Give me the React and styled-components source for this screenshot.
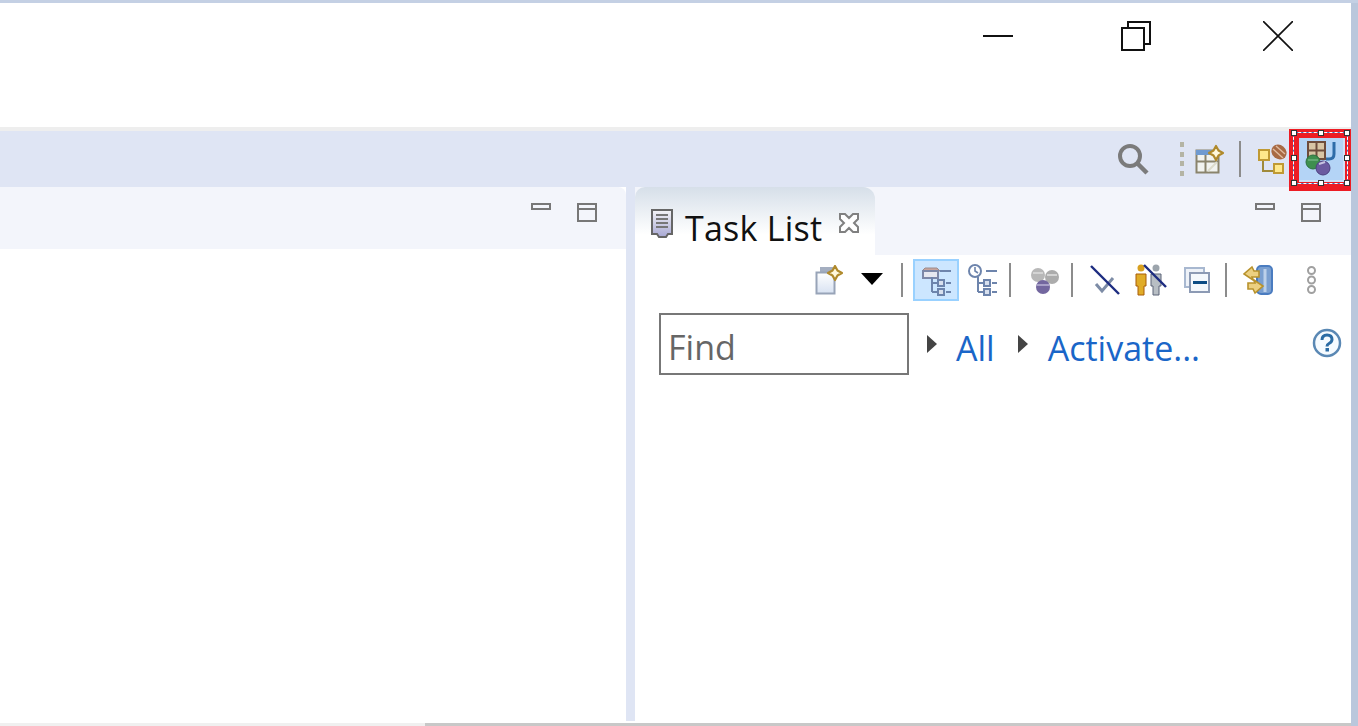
import styled, { createGlobalStyle } from "styled-components";

const GlobalStyle = createGlobalStyle`
  html, body {
    margin: 0;
    padding: 0;
    background: #fff;
    overflow: hidden;
  }
`;

const MinimizeIcon = () => (
  <svg width="30" height="30" viewBox="0 0 30 30">
    <rect x="0" y="14" width="30" height="2" fill="#111" />
  </svg>
);

const RestoreIcon = () => (
  <svg width="30" height="30" viewBox="0 0 30 30" fill="none" stroke="#111" strokeWidth="2">
    <rect x="1" y="7" width="22" height="22" />
    <path d="M7 7V1h22v22h-6" />
  </svg>
);

const CloseIcon = () => (
  <svg width="30" height="30" viewBox="0 0 30 30" stroke="#111" strokeWidth="1.6">
    <path d="M0 0l30 30M30 0L0 30" />
  </svg>
);

const SearchIcon = () => (
  <svg width="32" height="32" viewBox="0 0 32 32" fill="none" stroke="#7b7b7b">
    <circle cx="13" cy="13" r="10" strokeWidth="4" />
    <path d="M20 20l10 10" strokeWidth="4.5" />
  </svg>
);

const DotsIcon = () => (
  <svg width="4" height="34" viewBox="0 0 4 34" fill="#b4b4a4">
    <rect y="0" width="4" height="5" />
    <rect y="10" width="4" height="5" />
    <rect y="19" width="4" height="5" />
    <rect y="29" width="4" height="5" />
  </svg>
);

const Sparkle = ({ x, y }) => (
  <g transform={`translate(${x} ${y})`}>
    <path
      d="M7 0l2.5 4.5L14 7 9.5 9.5 7 14 4.5 9.5 0 7l4.5-2.5z"
      fill="#fff8dc"
      stroke="#b08a2c"
      strokeWidth="2.2"
      strokeLinejoin="round"
    />
  </g>
);

const NewPerspectiveIcon = () => (
  <svg width="30" height="30" viewBox="0 0 30 30">
    <rect x="1.5" y="6.5" width="22" height="22" fill="#f1f3f0" stroke="#8a846c" strokeWidth="2" />
    <rect x="1" y="6" width="23" height="5" fill="#6f9ad0" />
    <path d="M1.5 17.5h22M10.5 11v17" stroke="#8a846c" strokeWidth="2" />
    <path d="M13 27l9-9" stroke="#dcdccc" strokeWidth="2" />
    <Sparkle x="14" y="2" />
  </svg>
);

const PlanIcon = () => (
  <svg width="30" height="32" viewBox="0 0 30 32">
    <path d="M5 15v13h10" fill="none" stroke="#a08a3a" strokeWidth="2" />
    <rect x="1" y="7" width="10" height="10" fill="#ffe98c" stroke="#c09a34" strokeWidth="2" />
    <rect x="16" y="21" width="9" height="9" fill="#ffe98c" stroke="#c09a34" strokeWidth="2" />
    <ellipse cx="21" cy="9" rx="8" ry="7" fill="#a86a44" transform="rotate(40 21 9)" />
    <path d="M15 6l10 9M18 3l9 8" stroke="#e0bca0" strokeWidth="1.4" />
  </svg>
);

const JavaPerspectiveIcon = () => (
  <svg width="34" height="36" viewBox="0 0 34 36">
    <rect x="5" y="1" width="17" height="17" fill="#d8c4a4" stroke="#6e4c3c" strokeWidth="2" />
    <path d="M13.5 0v18M5 9.5h17" stroke="#6e4c3c" strokeWidth="2" />
    <path d="M31 1v12q0 5-5 5h-3" fill="none" stroke="#2f6ca8" strokeWidth="3" />
    <circle cx="10" cy="21" r="7" fill="#3e8f4e" stroke="#2d6f40" strokeWidth="1" />
    <path d="M5 19h10" stroke="#6cb07c" strokeWidth="1.6" />
    <circle cx="20" cy="27" r="7" fill="#6b5aa0" stroke="#4c4080" strokeWidth="1" />
    <path d="M16 23l6-2" stroke="#c8c4e0" strokeWidth="2" />
  </svg>
);

const TaskSheetIcon = () => (
  <svg width="22" height="30" viewBox="0 0 22 30">
    <path d="M1 1h20v24h-4l-2 3H8l-2-3H1z" fill="url(#sheet)" stroke="#666" strokeWidth="2" />
    <defs>
      <linearGradient id="sheet" x1="0" y1="0" x2="0" y2="1">
        <stop offset="0" stopColor="#f4f4f6" />
        <stop offset="1" stopColor="#a8a8d4" />
      </linearGradient>
    </defs>
    <path d="M5 6h12M5 10h12M5 14h12M5 18h12" stroke="#777" strokeWidth="2" />
  </svg>
);

const TabCloseIcon = () => (
  <svg width="20" height="20" viewBox="0 0 20 20">
    <path
      d="M1 1h5l4 4 4-4h5v5l-4 4 4 4v5h-5l-4-4-4 4H1v-5l4-4-4-4z"
      fill="#fff"
      stroke="#808080"
      strokeWidth="2"
    />
  </svg>
);

const NewTaskIcon = () => (
  <svg width="28" height="30" viewBox="0 0 28 30">
    <defs>
      <linearGradient id="page" x1="0" y1="0" x2="0" y2="1">
        <stop offset="0" stopColor="#fff" />
        <stop offset="1" stopColor="#d8e2f2" />
      </linearGradient>
    </defs>
    <path d="M5 2h13v6H5z" fill="#a4aec0" />
    <rect x="1.5" y="7.5" width="18" height="21" fill="url(#page)" stroke="#98a4b8" strokeWidth="2" />
    <Sparkle x="13" y="1" />
  </svg>
);

const Tree = () => (
  <>
    <path d="M11 13v15M11 19h8M11 28h8" stroke="#6d84ac" strokeWidth="2" fill="none" />
    <rect x="17" y="16" width="6" height="6" fill="#d8e0ee" stroke="#6d84ac" strokeWidth="2" />
    <rect x="17" y="25" width="6" height="6" fill="#d8e0ee" stroke="#6d84ac" strokeWidth="2" />
    <path d="M19 7h11M25 19h5M25 28h5" stroke="#6d84ac" strokeWidth="2" />
  </>
);

const CategoryTreeIcon = () => (
  <svg width="30" height="32" viewBox="0 0 30 32">
    <path d="M4 4h12l3 3H1z" fill="#c8a49c" stroke="#9c8c8c" strokeWidth="1" />
    <rect x="2" y="7" width="15" height="7" fill="#e6e8f0" stroke="#7c88a8" strokeWidth="2" />
    <Tree />
  </svg>
);

const ScheduleTreeIcon = () => (
  <svg width="30" height="32" viewBox="0 0 30 32">
    <circle cx="8" cy="7" r="6" fill="#fff" stroke="#6d84ac" strokeWidth="2" />
    <path d="M8 3v4l3 2" fill="none" stroke="#6d84ac" strokeWidth="1.6" />
    <Tree />
  </svg>
);

const FocusIcon = () => (
  <svg width="28" height="28" viewBox="0 0 28 28">
    <circle cx="7" cy="9" r="7" fill="#b8b8b8" />
    <circle cx="21" cy="11" r="7" fill="#acacac" />
    <path d="M2 7h10M16 9h10" stroke="#d4d4d4" strokeWidth="2" />
    <circle cx="12" cy="21" r="7" fill="#73679f" />
    <path d="M6 19h12" stroke="#a8a0c8" strokeWidth="2" />
  </svg>
);

const HideCompletedIcon = () => (
  <svg width="30" height="30" viewBox="0 0 30 30">
    <path d="M6 19l6 7 11-13" fill="none" stroke="#7d8ca6" strokeWidth="3" />
    <path d="M1 1l28 28" stroke="#1c2c80" strokeWidth="2.4" />
  </svg>
);

const PeopleIcon = () => (
  <svg width="34" height="32" viewBox="0 0 34 32">
    <circle cx="8" cy="4" r="3.5" fill="#d8a020" />
    <path d="M3 10h10v12h-2v9H5v-9H3z" fill="#e0ac28" stroke="#a85c08" strokeWidth="1" />
    <circle cx="23" cy="4" r="3.5" fill="#9ca4ac" />
    <path d="M18 10h10v12h-2v9h-6v-9h-2z" fill="#b8bec4" stroke="#5c6478" strokeWidth="1" />
    <path d="M11 1l22 22" stroke="#1c2c80" strokeWidth="2.4" />
  </svg>
);

const CollapseIcon = () => (
  <svg width="26" height="26" viewBox="0 0 26 26">
    <rect x="1" y="1" width="19" height="19" fill="#eef2f8" stroke="#a8b8d0" strokeWidth="2" />
    <rect x="6" y="6" width="19" height="19" fill="#f4f8fc" stroke="#8c9ab4" strokeWidth="2" />
    <rect x="9" y="14" width="14" height="3" fill="#0c4c84" />
  </svg>
);

const SyncIcon = () => (
  <svg width="30" height="30" viewBox="0 0 30 30">
    <rect x="14" y="1" width="15" height="28" rx="4" fill="#7a9fd0" stroke="#4a7cc0" strokeWidth="2" />
    <path d="M22 4v23" stroke="#bcd0ea" strokeWidth="3" />
    <path d="M9 2l2 4h5v6H9l1 3-9-6z" fill="#ecd080" stroke="#b8922c" strokeWidth="1.6" />
    <path d="M12 28l-2-4H5v-6h7l-1-3 9 6z" fill="#ecd080" stroke="#b8922c" strokeWidth="1.6" />
  </svg>
);

const ViewMenuIcon = () => (
  <svg width="11" height="28" viewBox="0 0 11 28" fill="#fff" stroke="#a0a0a0" strokeWidth="2">
    <circle cx="5.5" cy="4.5" r="3.5" />
    <circle cx="5.5" cy="14" r="3.5" />
    <circle cx="5.5" cy="23.5" r="3.5" />
  </svg>
);

const HelpIcon = () => (
  <svg width="30" height="30" viewBox="0 0 30 30">
    <circle cx="15" cy="15" r="13" fill="#f6fbff" stroke="#5a88b4" strokeWidth="2.5" />
    <path
      d="M10 12q0-5 5-5t5 4.5q0 2.5-3 4-2 1-2 3"
      fill="none"
      stroke="#2c6ca4"
      strokeWidth="3"
    />
    <rect x="13.5" y="20" width="3.5" height="3.5" fill="#2c6ca4" />
  </svg>
);

const handleSpots = [
  ["0%", "0%"],
  ["50%", "0%"],
  ["100%", "0%"],
  ["0%", "50%"],
  ["100%", "50%"],
  ["0%", "100%"],
  ["50%", "100%"],
  ["100%", "100%"],
];

const App = () => {
  return (
    <>
      <GlobalStyle />
      <Page>
        <TopEdge />
        <Frame>
          <Window>
            <TitleBar>
              <WindowButton $w={132}><MinimizeIcon /></WindowButton>
              <WindowButton $w={144}><RestoreIcon /></WindowButton>
              <WindowButton $w={140}><CloseIcon /></WindowButton>
            </TitleBar>
            <Divider />
            <PerspectiveBar>
              <BarSlot $ml={0}><SearchIcon /></BarSlot>
              <BarSlot $ml={31}><DotsIcon /></BarSlot>
              <BarSlot $ml={11}><NewPerspectiveIcon /></BarSlot>
              <BarSeparator />
              <BarSlot $ml={17}><PlanIcon /></BarSlot>
              <ActivePerspective>
                <JavaPerspectiveIcon />
                <Highlight />
                <SelectionBox>
                  {handleSpots.map(([x, y]) => (
                    <Handle key={x + y} $x={x} $y={y} />
                  ))}
                </SelectionBox>
              </ActivePerspective>
            </PerspectiveBar>
            <Workbench>
              <EditorPanel>
                <EditorHeader>
                  <PaneMinimize />
                  <PaneMaximize />
                </EditorHeader>
              </EditorPanel>
              <Sash />
              <TaskPanel>
                <TaskHeader>
                  <Tab>
                    <TaskSheetIcon />
                    <TabTitle>Task List</TabTitle>
                    <TabClose><TabCloseIcon /></TabClose>
                  </Tab>
                  <PaneControls>
                    <PaneMinimize />
                    <PaneMaximize />
                  </PaneControls>
                </TaskHeader>
                <TaskToolbar>
                  <ToolSlot><NewTaskIcon /></ToolSlot>
                  <DropArrow />
                  <ToolSeparator $ml={18} />
                  <ToggledTool><CategoryTreeIcon /></ToggledTool>
                  <ToolSlot $ml={8}><ScheduleTreeIcon /></ToolSlot>
                  <ToolSeparator $ml={12} />
                  <ToolSlot $ml={20}><FocusIcon /></ToolSlot>
                  <ToolSeparator $ml={12} />
                  <ToolSlot $ml={17}><HideCompletedIcon /></ToolSlot>
                  <ToolSlot $ml={13}><PeopleIcon /></ToolSlot>
                  <ToolSlot $ml={17}><CollapseIcon /></ToolSlot>
                  <ToolSeparator $ml={15} />
                  <ToolSlot $ml={16}><SyncIcon /></ToolSlot>
                  <ToolSlot $ml={33}><ViewMenuIcon /></ToolSlot>
                </TaskToolbar>
                <FindRow>
                  <FindBox>Find</FindBox>
                  <Twisty $ml={18} />
                  <FilterLink $ml={19}>All</FilterLink>
                  <Twisty $ml={23} />
                  <FilterLink $ml={20}>Activate...</FilterLink>
                  <HelpSlot><HelpIcon /></HelpSlot>
                </FindRow>
              </TaskPanel>
            </Workbench>
            <ScrollTrack>
              <ScrollThumb />
            </ScrollTrack>
          </Window>
          <RightEdge />
        </Frame>
      </Page>
    </>
  );
};

export default App;

const Page = styled.div`
  width: 1358px;
  height: 726px;
  display: flex;
  flex-direction: column;
  overflow: hidden;
  font-family: "Open Sans", "Noto Sans", sans-serif;
`;

const TopEdge = styled.div`
  height: 3px;
  flex: none;
  background: #c4d0e4;
`;

const Frame = styled.div`
  flex: 1;
  min-height: 0;
  display: flex;
`;

const Window = styled.div`
  width: 1351px;
  display: flex;
  flex-direction: column;
  background: #fff;
`;

const RightEdge = styled.div`
  flex: 1;
  background: #bac7dc;
`;

const TitleBar = styled.div`
  height: 124px;
  flex: none;
  display: flex;
  justify-content: flex-end;
  padding-right: 3px;
  box-sizing: border-box;
`;

const WindowButton = styled.div`
  width: ${(p) => p.$w}px;
  height: 66px;
  display: flex;
  align-items: center;
  justify-content: center;
`;

const Divider = styled.div`
  height: 4px;
  flex: none;
  background: #eeeeee;
`;

const PerspectiveBar = styled.div`
  height: 56px;
  flex: none;
  display: flex;
  align-items: center;
  justify-content: flex-end;
  padding-right: 6px;
  box-sizing: border-box;
  background: #dfe5f4;
`;

const BarSlot = styled.div`
  display: flex;
  margin-left: ${(p) => p.$ml}px;
`;

const BarSeparator = styled.div`
  width: 2px;
  height: 36px;
  margin-left: 14px;
  background: #8c8c8c;
`;

const ActivePerspective = styled.div`
  position: relative;
  width: 46px;
  height: 44px;
  margin-left: 11px;
  margin-top: 2px;
  padding-right: 3px;
  box-sizing: border-box;
  display: flex;
  align-items: center;
  justify-content: center;
  background: #b4d4f6;
  border-right: 2px solid #cfe0f6;
  border-bottom: 2px solid #cfe0f6;
`;

const Highlight = styled.div`
  position: absolute;
  left: -10px;
  top: -9px;
  width: 62px;
  height: 62px;
  box-sizing: border-box;
  border-style: solid;
  border-color: #ed1c24;
  border-width: 9px 6px 9px 10px;
`;

const SelectionBox = styled.div`
  position: absolute;
  left: -6px;
  top: -6px;
  width: 55px;
  height: 52px;
  box-sizing: border-box;
  border: 1px solid #3f76c4;

  &::before {
    content: "";
    position: absolute;
    inset: -1px;
    border: 1px dashed #fff;
  }
`;

const Handle = styled.div`
  position: absolute;
  left: ${(p) => p.$x};
  top: ${(p) => p.$y};
  width: 6px;
  height: 6px;
  box-sizing: border-box;
  background: #fff;
  border: 1px solid #333;
  transform: translate(-50%, -50%);
`;

const Workbench = styled.div`
  flex: 1;
  min-height: 0;
  display: flex;
`;

const EditorPanel = styled.div`
  width: 626px;
  flex: none;
  background: #fff;
  border-top-right-radius: 8px;
  overflow: hidden;
`;

const EditorHeader = styled.div`
  height: 62px;
  display: flex;
  justify-content: flex-end;
  align-items: flex-start;
  gap: 26px;
  padding: 16px 29px 0 0;
  box-sizing: border-box;
  background: #f3f5fb;
`;

const PaneMinimize = styled.div`
  width: 20px;
  height: 7px;
  box-sizing: border-box;
  border: 2px solid #777;
`;

const PaneMaximize = styled.div`
  width: 20px;
  height: 19px;
  box-sizing: border-box;
  border: 2px solid #777;
  background: linear-gradient(#777, #777) 0 3px / 100% 2px no-repeat;
`;

const Sash = styled.div`
  width: 9px;
  flex: none;
  background: #dfe5f4;
`;

const TaskPanel = styled.div`
  flex: 1;
  display: flex;
  flex-direction: column;
  background: #fff;
`;

const TaskHeader = styled.div`
  height: 68px;
  flex: none;
  display: flex;
  justify-content: space-between;
  background: #f3f5fb;
`;

const Tab = styled.div`
  width: 240px;
  display: flex;
  align-items: flex-start;
  padding: 22px 0 0 16px;
  box-sizing: border-box;
  border-radius: 10px 12px 0 0;
  background: linear-gradient(#d6dfe9, #fff 70%);
`;

const TabTitle = styled.span`
  margin-left: 12px;
  margin-top: -4px;
  font-size: 34px;
  letter-spacing: 0.25px;
  line-height: 46px;
  color: #111;
`;

const TabClose = styled.div`
  margin-left: 17px;
  margin-top: 4px;
  display: flex;
`;

const PaneControls = styled.div`
  display: flex;
  align-items: flex-start;
  gap: 26px;
  padding: 16px 30px 0 0;
`;

const TaskToolbar = styled.div`
  height: 50px;
  flex: none;
  display: flex;
  align-items: center;
  padding-left: 180px;
`;

const ToolSlot = styled.div`
  display: flex;
  margin-left: ${(p) => p.$ml || 0}px;
`;

const DropArrow = styled.div`
  width: 0;
  height: 0;
  margin-left: 18px;
  margin-top: -2px;
  border-left: 11px solid transparent;
  border-right: 11px solid transparent;
  border-top: 12px solid #000;
`;

const ToolSeparator = styled.div`
  width: 2px;
  height: 34px;
  margin-left: ${(p) => p.$ml}px;
  background: #8c8c8c;
`;

const ToggledTool = styled.div`
  width: 46px;
  height: 42px;
  margin-left: 10px;
  box-sizing: border-box;
  display: flex;
  align-items: center;
  justify-content: center;
  background: #cce6ff;
  border: 2px solid #99d1ff;
`;

const FindRow = styled.div`
  display: flex;
  align-items: flex-start;
  margin-top: 8px;
  padding-left: 24px;
`;

const FindBox = styled.div`
  width: 250px;
  height: 62px;
  box-sizing: border-box;
  border: 2px solid #777;
  padding: 0 0 0 7px;
  font-size: 34px;
  line-height: 64px;
  color: #666;
`;

const Twisty = styled.div`
  width: 0;
  height: 0;
  margin-left: ${(p) => p.$ml}px;
  margin-top: 22px;
  border-top: 9px solid transparent;
  border-bottom: 9px solid transparent;
  border-left: 10px solid #444;
`;

const FilterLink = styled.span`
  margin-left: ${(p) => p.$ml}px;
  font-size: 34px;
  line-height: 70px;
  color: #1a66c8;
`;

const HelpSlot = styled.div`
  margin-left: auto;
  margin-right: 9px;
  margin-top: 15px;
  display: flex;
`;

const ScrollTrack = styled.div`
  height: 3px;
  flex: none;
  margin-top: 2px;
  background: #f0f0f0;
`;

const ScrollThumb = styled.div`
  height: 3px;
  margin-left: 425px;
  background: #c8c8c8;
`;
